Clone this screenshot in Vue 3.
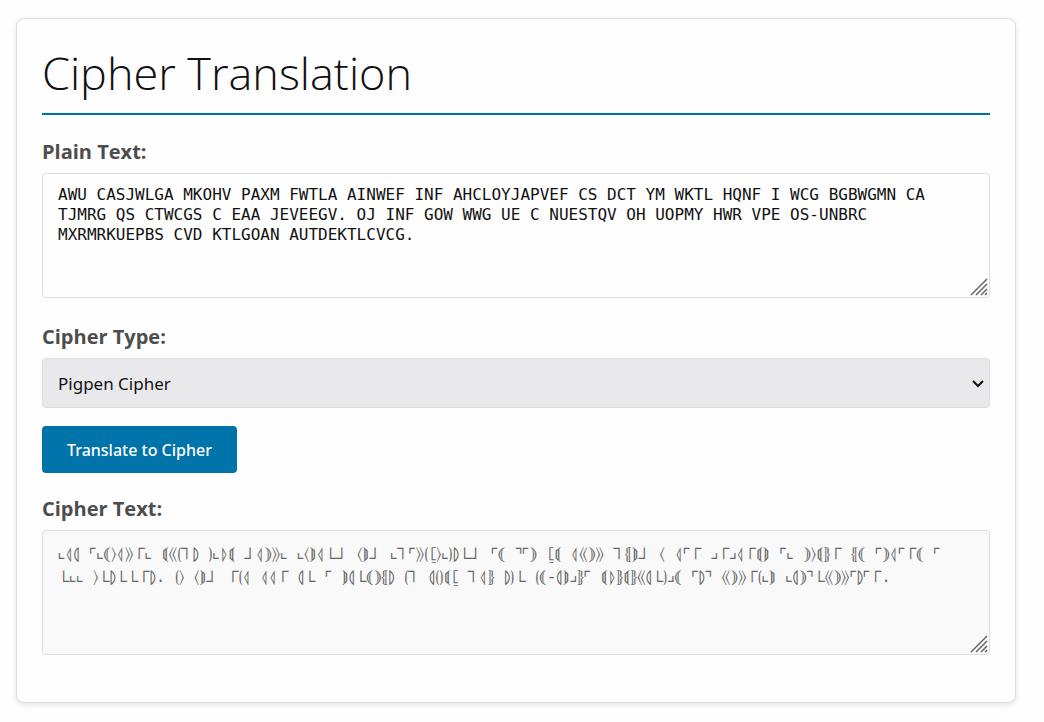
<script setup>
import { computed, ref } from 'vue'

const plainText = ref(
  'AWU CASJWLGA MKOHV PAXM FWTLA AINWEF INF AHCLOYJAPVEF CS DCT YM WKTL HQNF I WCG BGBWGMN CA ' +
  'TJMRG QS CTWCGS C EAA JEVEEGV. OJ INF GOW WWG UE C NUESTQV OH UOPMY HWR VPE OS-UNBRC ' +
  'MXRMRKUEPBS CVD KTLGOAN AUTDEKTLCVCG.'
)
const cipherType = ref('pigpen')

const letters = 'ABCDEFGHIJKLMNOPQRSTUVWXYZ'
const symbols = [...'⌞⌟⌜⌝⎿⏌⎾⏋⟨⟩⟪⟫⟬⟭⟮⟯⦃⦄⦅⦆⦇⦈⦉⦊⦋⦌']

function encode(text) {
  return [...text.toUpperCase()]
    .map((ch) => {
      const index = letters.indexOf(ch)
      return index < 0 ? ch : symbols[index]
    })
    .join('')
}

const submitted = ref(plainText.value)
const cipherText = computed(() => encode(submitted.value))

function translate() {
  submitted.value = plainText.value
}
</script>

<template>
  <main class="card">
    <h1>Cipher Translation</h1>
    <form @submit.prevent="translate">
      <label for="plain">Plain Text:</label>
      <div class="field">
        <textarea id="plain" v-model="plainText" spellcheck="false"></textarea>
        <svg class="grip" viewBox="0 0 18 18" aria-hidden="true">
          <path d="M1 17L17 1M6 17L17 6M11 17L17 11M15 17L17 15" />
        </svg>
      </div>

      <label for="type">Cipher Type:</label>
      <div class="field choice">
        <select id="type" v-model="cipherType">
          <option value="pigpen">Pigpen Cipher</option>
        </select>
        <svg class="chevron" viewBox="0 0 12 8" aria-hidden="true">
          <path d="M1 1L6 6L11 1" />
        </svg>
      </div>

      <button type="submit">Translate to Cipher</button>

      <label for="cipher">Cipher Text:</label>
      <div class="field">
        <textarea id="cipher" class="output" :value="cipherText" readonly spellcheck="false"></textarea>
        <svg class="grip" viewBox="0 0 18 18" aria-hidden="true">
          <path d="M1 17L17 1M6 17L17 6M11 17L17 11M15 17L17 15" />
        </svg>
      </div>
    </form>
  </main>
</template>

<style>
body {
  background: #fefefe;
}
</style>

<style scoped>
.card {
  box-sizing: border-box;
  max-width: 1000px;
  margin: 18px 28px 18px 16px;
  padding: 25px;
  border: 1px solid #ddd;
  border-radius: 8px;
  background: #fefefe;
  box-shadow: 0 2px 5px rgba(0, 0, 0, 0.1);
  font-family: "Open Sans", sans-serif;
}

h1 {
  margin: 0 0 20px;
  padding-bottom: 12px;
  border-bottom: 2px solid #0073aa;
  color: #111;
  font-size: 45px;
  font-weight: 300;
  line-height: 57px;
}

form {
  display: flex;
  flex-direction: column;
}

label {
  margin-bottom: 5px;
  color: #4d4d4d;
  font-size: 20px;
  font-weight: 700;
  line-height: 33px;
}

.field {
  position: relative;
  margin-bottom: 22px;
}

.choice {
  margin-bottom: 18px;
}

textarea,
select {
  display: block;
  box-sizing: border-box;
  width: 100%;
  margin: 0;
  border: 1px solid #ddd;
  border-radius: 4px;
  outline: none;
}

textarea {
  height: 125px;
  padding: 11px 15px;
  background: #fefefe;
  color: #111;
  font-family: "DejaVu Sans Mono", monospace;
  font-size: 16px;
  line-height: 20px;
  resize: vertical;
}

textarea::-webkit-resizer {
  background: transparent;
}

.output {
  padding-top: 13px;
  background: #f9f9f9;
  color: #666;
  font-family: "Liberation Mono", "Noto Sans Symbols", "STIX Two Math", monospace;
  line-height: 23px;
}

select {
  height: 50px;
  padding: 0 15px;
  appearance: none;
  background: #e9e9eb;
  color: #111;
  font-family: "Noto Sans", sans-serif;
  font-size: 17px;
}

.grip,
.chevron {
  position: absolute;
  fill: none;
  pointer-events: none;
}

.grip {
  right: 2px;
  bottom: 2px;
  width: 18px;
  height: 18px;
  stroke: #666;
  stroke-width: 1.5;
}

.chevron {
  top: 22px;
  right: 6px;
  width: 12px;
  height: 8px;
  stroke: #111;
  stroke-width: 2;
}

button {
  align-self: flex-start;
  height: 47px;
  margin: 0 0 19px;
  padding: 0 25px;
  border: 0;
  border-radius: 4px;
  background: #0073aa;
  color: #fefefe;
  font-family: "Noto Sans", sans-serif;
  font-size: 16px;
  font-weight: 500;
}
</style>
